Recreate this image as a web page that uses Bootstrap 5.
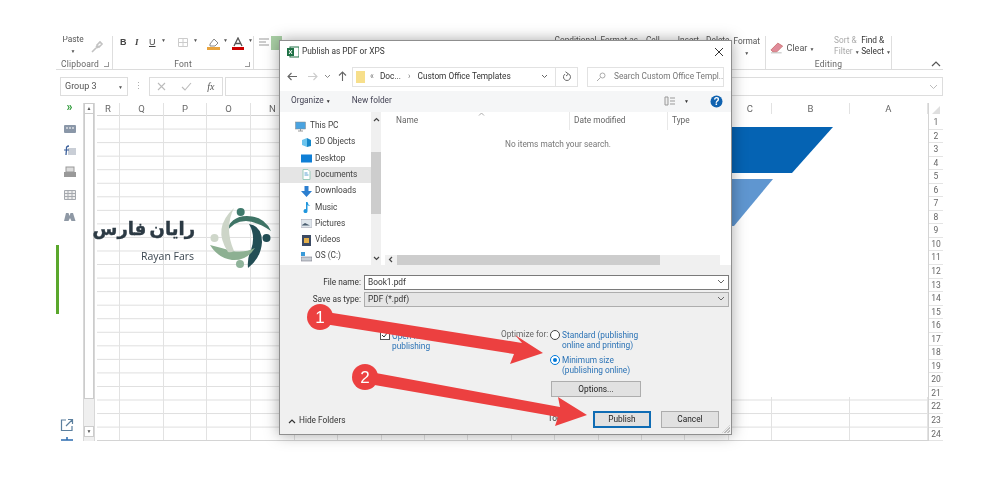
<!DOCTYPE html>
<html lang="en">
<head>
<meta charset="UTF-8">
<title>Publish as PDF or XPS</title>
<link href="https://cdn.jsdelivr.net/npm/bootstrap@5.3.0/dist/css/bootstrap.min.css" rel="stylesheet">
<style>
html,body{width:1000px;height:478px;overflow:hidden;background:#fff;}
body{position:relative;font-family:Roboto,"Liberation Sans",sans-serif;font-size:8.3px;color:#333;line-height:1.2;filter:blur(.3px);}
/* excel window */
.xl-win{width:887px;height:404px;margin:36px 0 0 56px;}
.xl-ribbon{height:34px;border-bottom:1px solid #dcdcdc;overflow:hidden;font-size:8.3px;color:#555;}
.rb-grp{height:100%;border-right:1px solid #dedede;position:relative;flex:none;}
.rb-top{height:23px;}
.rb-lbl{height:10px;line-height:10px;text-align:center;color:#666;font-size:8.5px;letter-spacing:.2px;}
.rb-clip{width:57px;}
.rb-font{width:141px;}
.rb-mid{width:512px;}
.rb-edit{width:126px;}
.rb-stack{line-height:10.500px;margin-top:-2px;}
.rb-caret{font-size:5px;color:#555;}
.rb-ltr{font:bold 9px "Liberation Serif",serif;color:#444;}
.launch{width:5px;height:5px;border:1px solid #999;border-width:0 1px 1px 0;position:absolute;bottom:2px;right:3px;}
.xl-fbar{height:19px;margin:7px 0 7px 4px;gap:0;}
.fb-name{width:68px;border:1px solid #ddd;padding:0 4px;font-size:9px;color:#555;}
.fb-dots{width:21px;text-align:center;color:#aaa;font-size:9px;}
.fb-btns{width:74px;border:1px solid #ddd;margin-right:2px;color:#aaa;}
.fb-input{flex:1;border:1px solid #ddd;}
.xl-sheet{height:338px;}
.xl-rail{width:27px;margin-top:-2px;gap:6px;}
.rail-ico{height:16px;}
.rail-more{color:#2e9b3a;font-size:12px;font-weight:700;line-height:14px;margin:-1px 0 1px;}
.side-bar{position:absolute;left:56px;top:245px;width:3px;height:69px;background:#5aa72c;}
.ol-scroll{width:12px;margin-right:2px;background:#efefef;border:1px solid #d8d8d8;border-width:0 1px;position:relative;}
.ol-btn{height:11px;background:#fff;border:1px solid #ccc;font-size:5px;text-align:center;line-height:9px;color:#555;}
.ol-thumb{height:285px;background:#fff;border:1px solid #ccc;border-top:0;}
.gd-wrap{flex:1;height:338px;}
.gd-cols{height:100%;background:repeating-linear-gradient(to bottom,transparent 0,transparent 12.56px,#dedede 12.56px,#dedede 13.56px);background-position:0 13px;background-size:100% 13.56px;background-repeat:repeat-y;border-bottom:1px solid #d4d4d4;}
.gd-col{height:100%;border-right:1px solid #e2e2e2;flex:none;}
.gd-head{height:13px;background:#fff;border-bottom:1px solid #d4d4d4;text-align:center;font-size:9.5px;line-height:12px;color:#666;}
.gd-rows{width:15px;border-left:1px solid #d4d4d4;background:#fff;}
.gd-corner{height:13px;position:relative;}
.gd-corner::after{content:"";position:absolute;right:3px;bottom:2px;border-style:solid;border-width:0 0 8px 8px;border-color:transparent transparent #dfdfdf transparent;}
.gd-num{height:13.56px;line-height:13px;font-size:8.5px;color:#666;text-align:center;border-bottom:1px solid #e4e4e4;}
.pic-blank{position:absolute;left:732px;top:114px;width:196px;height:283px;background:#fff;}
.over-svg{position:absolute;left:0;top:0;pointer-events:none;}
/* logo */
.logo-fa{position:absolute;left:96px;top:214px;width:99px;font:bold 18px "DejaVu Sans",sans-serif;color:#2c3a44;direction:rtl;text-align:center;white-space:nowrap;line-height:30px;word-spacing:-3px;-webkit-text-stroke:.4px #2c3a44;}
.logo-en{position:absolute;left:141px;top:249px;font:10.5px/14px "Open Sans",sans-serif;color:#3b4650;white-space:nowrap;}
/* dialog */
.dlg{position:absolute;left:279px;top:40px;width:453px;height:395px;background:#fff;border:1px solid #8f8f8f;box-shadow:0 0 14px rgba(0,0,0,.35);color:#333;}
.dlg-title{height:22px;padding:0 7px 0 3px;font-size:8.3px;}
.dlg-nav{height:20px;margin-top:4px;padding:0 7px 0 5px;}
.nav-btn{width:15px;margin-right:3px;text-align:center;line-height:0;}
.addr{width:204px;height:20px;border:1px solid #e2e2e2;padding:0 7px 0 3px;}
.addr-ref{width:22px;height:20px;border:1px solid #e2e2e2;border-left:0;}
.srch{width:137px;height:20px;border:1px solid #e2e2e2;margin-left:9px;padding:0 2px 0 8px;color:#777;white-space:nowrap;overflow:hidden;}
.dlg-tools{height:21px;margin-top:4px;background:#f5f6f7;padding:0 8px 0 11px;color:#445;}
.dlg-body{height:154px;position:relative;}
.nav-tree{width:91px;height:100%;padding-top:6px;}
.tree-row{height:16.3px;padding-left:21px;color:#444;white-space:nowrap;}
.tree-row.pc{padding-left:15px;}
.tree-row.sel{background:#e5e5e5;}
.vscroll{width:10px;height:100%;background:#f0f0f0;position:relative;}
.vs-thumb{position:absolute;top:40px;left:0;right:0;height:62px;background:#cdcdcd;}
.sc-arr{position:absolute;left:0;right:0;text-align:center;font-size:7px;line-height:9px;color:#555;}
.lst-wrap{flex:1;position:relative;}
.lst-head{height:18px;color:#666;}
.lst-name{width:188px;padding-left:15px;}
.lst-date{width:98px;padding-left:4px;border-left:1px solid #e8e8e8;height:100%;}
.lst-type{padding-left:4px;border-left:1px solid #e8e8e8;height:100%;}
.lst-empty{text-align:center;color:#777;margin-top:10px;padding-left:4px;}
.hscroll{position:absolute;left:4px;bottom:0;width:335px;height:10px;background:#f0f0f0;}
.hs-thumb{position:absolute;left:12px;top:0;bottom:0;width:263px;background:#cdcdcd;}
.dlg-foot{height:169px;background:#f0f0f0;padding-top:10px;}
.fld-row{height:15px;margin-bottom:2px;}
.fld-lbl{width:84px;text-align:right;padding-right:3px;color:#333;}
.fld-box{width:365px;height:15px;border:1px solid #7a7a7a;background:#fff;padding:0 3px;position:relative;line-height:13px;}
.fld-box.combo{background:#e5e5e5;border-color:#adadad;}
.fld-chev{position:absolute;right:3px;top:3px;}
.opt-row{margin-top:21px;margin-left:100px;height:51px;}
.opt-left{width:121px;}
.chk{width:10px;height:10px;border:1px solid #555;background:#fff;flex:none;margin-right:2px;margin-top:-1px;}
.opt-link{color:#2a72b5;line-height:10px;}
.opt-lbl{width:49px;color:#666;white-space:nowrap;}
.rad{width:10px;height:10px;border:1px solid #444;border-radius:50%;background:#fff;flex:none;margin:0 2px 0 0;position:relative;}
.rad.on{border-color:#0078d7;}
.rad.on::after{content:"";position:absolute;inset:2px;border-radius:50%;background:#0078d7;}
.rad-item{margin-bottom:5px;}
.dlg-btn{width:58px;height:17px;background:#e1e1e1;border:1px solid #adadad;font-size:8.3px;color:#222;text-align:center;line-height:15px;padding:0;border-radius:0;}
.dlg-btn.pri{border:2px solid #0f6cb4;line-height:13px;}
.btn-opt{width:90px;height:16px;line-height:14px;display:block;}
.dlg-bot{margin-top:13px;height:18px;padding:0 12px 0 8px;}
.hide-fld{color:#333;margin-top:3px;}
.gripper{position:absolute;right:1px;bottom:1px;width:8px;height:8px;background:repeating-linear-gradient(135deg,transparent 0,transparent 1px,#bbb 1px,#bbb 2px);clip-path:polygon(100% 0,100% 100%,0 100%);}
</style>
</head>
<body>
<div class="xl-win">
  <div class="xl-ribbon d-flex">
    <div class="rb-grp rb-clip">
      <div class="rb-top d-flex">
        <div class="rb-stack text-center" style="width:34px">Paste<br><span class="rb-caret">▼</span></div>
        <svg width="14" height="14" viewBox="0 0 14 14" class="mt-1"><path d="M2 12 7 7M7 5l3-3 2 2-3 3zM6 6l2 2" stroke="#c2c2c2" stroke-width="1.600" fill="none"/></svg>
      </div>
      <div class="rb-lbl pe-2">Clipboard</div><span class="launch"></span>
    </div>
    <div class="rb-grp rb-font">
      <div class="rb-top d-flex align-items-start" style="padding:1px 0 0 7px">
        <span class="rb-ltr" style="width:15px;font-family:'Liberation Sans'">B</span>
        <span class="rb-ltr fst-italic" style="width:14px">I</span>
        <span class="rb-ltr text-decoration-underline" style="width:12px;font-family:'Liberation Sans';font-weight:400">U</span>
        <span class="rb-caret" style="width:12px">▼</span>
        <svg width="12" height="11" viewBox="0 0 12 11" class="me-1 ms-1"><path d="M1.500 1.500h9v8h-9zM6 1.500v8M1.500 5.500h9" stroke="#ccc" fill="none"/></svg>
        <span class="rb-caret" style="width:14px">▼</span>
        <svg width="13" height="13" viewBox="0 0 13 13" style="margin-right:3px"><path d="M3 7 7 2l4 4-3 3H3z" fill="#fff" stroke="#888"/><rect y="10" width="13" height="3" fill="#e8a33d"/></svg>
        <span class="rb-caret" style="width:9px">▼</span>
        <svg width="12" height="13" viewBox="0 0 12 13"><path d="M2 9 6 1l4 8M3.600 6.500h4.800" stroke="#555" stroke-width="1.300" fill="none"/><rect y="10" width="12" height="3" fill="#c00"/></svg>
        <span class="rb-caret ms-1">▼</span>
      </div>
      <div class="rb-lbl">Font</div><span class="launch"></span>
    </div>
    <div class="rb-grp rb-mid">
      <div class="rb-top d-flex">
        <svg width="24" height="14" viewBox="0 0 24 14" class="ms-1"><path d="M1 3h10M1 6h7M1 9h10" stroke="#999"/><rect x="13" width="11" height="14" fill="#a9cfa5"/></svg>
        <div class="ms-auto d-flex text-nowrap" style="margin-right:5px"><span>Conditional</span><span style="margin-left:4px">Format as</span><span style="margin-left:8px">Cell</span><span style="margin-left:18px">Insert</span><span style="margin-left:7px">Delete</span><span class="text-center rb-stack" style="margin:0 0 0 4px">Format<br><span class="rb-caret">▼</span></span></div>
      </div>
    </div>
    <div class="rb-grp rb-edit">
      <div class="rb-top d-flex">
        <svg width="14" height="13" viewBox="0 0 14 13" class="ms-1" style="margin-top:5px"><path d="M1 9 8 2l5 3-6 6H3z" fill="#e08b9a" stroke="#c77"/><path d="M1 12h11" stroke="#bbb"/></svg>
        <span style="margin:7px 0 0 3px;font-size:9px;width:49px">Clear <span class="rb-caret">▼</span></span>
        <span class="rb-stack text-nowrap" style="width:28px;color:#aaa;margin-top:-1px">Sort &amp;<br>Filter <span class="rb-caret">▼</span></span>
        <span class="rb-stack text-nowrap" style="color:#333;margin-top:-1px">Find &amp;<br>Select <span class="rb-caret">▼</span></span>
      </div>
      <div class="rb-lbl">Editing</div>
    </div>
    <svg width="10" height="8" viewBox="0 0 10 8" style="margin:24px 0 0 39px"><path d="M1 6 5 2l4 4" stroke="#555" stroke-width="1.200" fill="none"/></svg>
  </div>
  <div class="xl-fbar d-flex align-items-stretch">
    <div class="fb-name d-flex align-items-center justify-content-between">Group 3<span class="rb-caret">▼</span></div>
    <div class="fb-dots d-flex align-items-center justify-content-center">⋮</div>
    <div class="fb-btns d-flex align-items-center justify-content-around">
      <svg width="9" height="9" viewBox="0 0 9 9"><path d="M1 1l7 7M8 1 1 8" stroke="#bbb" stroke-width="1.100"/></svg>
      <svg width="11" height="9" viewBox="0 0 11 9"><path d="M1 5l3 3 6-7" stroke="#bbb" stroke-width="1.100" fill="none"/></svg>
      <span class="fst-italic" style="font:italic 10px 'Liberation Serif',serif;color:#555">fx</span>
    </div>
    <div class="fb-input d-flex align-items-center justify-content-end pe-1"><svg width="9" height="6" viewBox="0 0 9 6"><path d="M1 1l3.500 3.500L8 1" stroke="#bbb" fill="none"/></svg></div>
  </div>
  <div class="xl-sheet d-flex">
    <div class="xl-rail d-flex flex-column align-items-center" style="flex:none">
      <span class="rail-more">»</span>
      <svg class="rail-ico" width="14" height="16" viewBox="0 0 14 16"><rect x="1" y="4" width="12" height="8" rx="1" fill="#8a97a8"/><path d="M3 7h8" stroke="#fff" stroke-dasharray="2 1"/></svg>
      <svg class="rail-ico" width="14" height="16" viewBox="0 0 14 16"><rect x="5" y="5" width="8" height="7" fill="#c9ced6"/><path d="M6 3Q3 3 3.500 6L3 12" stroke="#3a5f9a" stroke-width="1.300" fill="none"/><path d="M1 7h5" stroke="#3a5f9a"/></svg>
      <svg class="rail-ico" width="14" height="16" viewBox="0 0 14 16"><rect x="3" y="2" width="8" height="5" fill="#ddd" stroke="#999"/><rect x="1" y="7" width="12" height="5" fill="#999"/></svg>
      <svg class="rail-ico" width="14" height="16" viewBox="0 0 14 16"><path d="M1.500 3.500h11v9h-11zM1.500 6.500h11M1.500 9.500h11M5 3.500v9M9 3.500v9" stroke="#a5a9ae" fill="#eee"/></svg>
      <svg class="rail-ico" width="14" height="16" viewBox="0 0 14 16"><path d="M1 12 3 4h2.500l1 3 1-3H10l2.500 8H8.500L7 9l-1.500 3z" fill="#8f99a5"/></svg>
      <svg class="rail-ico mt-auto" style="margin-bottom:-2px;margin-left:-5px" width="14" height="14" viewBox="0 0 14 14"><path d="M6 2H1.500v10.500H12V8M8 1.500h4.500V6M12.500 1.500 6 8" stroke="#5b7f9e" stroke-width="1.200" fill="none"/></svg>
      <svg style="margin-left:-5px" width="14" height="4" viewBox="0 0 14 4"><path d="M1 3h12M7 0v3" stroke="#2d6cb0" stroke-width="1.500"/></svg>
    </div>
    <div class="ol-scroll d-flex flex-column">
      <div class="ol-btn">▲</div>
      <div class="ol-thumb"></div>
      <div class="ol-btn mt-auto mb-1">▼</div>
    </div>
    <div class="gd-wrap d-flex">
      <div class="gd-cols d-flex flex-grow-1" id="gridCols"></div>
      <div class="gd-rows" id="gridRows"><div class="gd-corner"></div></div>
    </div>
  </div>
</div>
<div class="side-bar"></div>

<div class="pic-blank"></div>
<svg class="over-svg" width="1000" height="478" viewBox="0 0 1000 478">
  <polygon points="725,127 833,127 792,173 725,173" fill="#0563b3"/>
  <polygon points="725,179 773,179 734,226 725,226" fill="#5f96d0"/>
  <!-- logo mark -->
  <circle cx="240.700" cy="212" r="4" fill="#3f7a6c"/>
  <circle cx="266.500" cy="238" r="4" fill="#234e55"/>
  <circle cx="240" cy="264" r="4" fill="#8fb39a"/>
  <circle cx="214.500" cy="238" r="4" fill="#cfd7ca"/>
  <path d="M226 233Q230 216 247 216Q264 216 271 231Q258 222 246 221Q233 221 226 233Z" fill="#3f7466"/>
  <path d="M249 224Q262 226 262 242Q261 258 248 268Q247 258 251 250Q256 236 249 224Z" fill="#234e55"/>
  <path d="M210 245Q222 248 232 251Q245 253 255 248Q247 261 232 260Q218 258 210 245Z" fill="#8db092"/>
  <path d="M234 208Q212 228 228 252Q231 253 234 251Q224 228 234 208Z" fill="#cdd5c8"/>
</svg>
<div class="logo-fa">رایان فارس</div>
<div class="logo-en">Rayan Fars</div>

<div class="dlg d-flex flex-column">
  <div class="dlg-title d-flex align-items-center">
    <svg width="12" height="12" viewBox="0 0 12 12" class="ms-1" style="margin-right:3px"><rect x="3" y="1" width="9" height="10" fill="#fff" stroke="#1e7145"/><rect y="2" width="7" height="8" fill="#1e7145"/><path d="M2 4l3 4M5 4 2 8" stroke="#fff"/></svg>
    <span>Publish as PDF or XPS</span>
    <svg class="ms-auto" width="10" height="10" viewBox="0 0 10 10"><path d="M1 1l8 8M9 1 1 9" stroke="#333"/></svg>
  </div>
  <div class="dlg-nav d-flex align-items-center">
    <span class="nav-btn" style="margin-right:5px"><svg width="11" height="9" viewBox="0 0 11 9"><path d="M10 4.500H1M4.500 1 1 4.500 4.500 8" stroke="#666" stroke-width="1.100" fill="none"/></svg></span>
    <span class="nav-btn"><svg width="11" height="9" viewBox="0 0 11 9"><path d="M1 4.500h9M6.500 1 10 4.500 6.500 8" stroke="#ccc" stroke-width="1.100" fill="none"/></svg></span>
    <span class="nav-btn" style="width:9px"><svg width="7" height="5" viewBox="0 0 7 5"><path d="M1 1l2.500 2.500L6 1" stroke="#888" fill="none"/></svg></span>
    <span class="nav-btn" style="margin-right:2px"><svg width="9" height="11" viewBox="0 0 9 11"><path d="M4.500 10V1M1 4.500 4.500 1 8 4.500" stroke="#666" stroke-width="1.100" fill="none"/></svg></span>
    <div class="addr d-flex align-items-center">
      <svg width="9" height="12" viewBox="0 0 9 12" style="flex:none"><rect width="9" height="12" fill="#f7df8b"/></svg>
      <span style="color:#777;margin:0 6px 0 5px">«</span><span>Doc...</span><span style="color:#777;margin:0 7px">›</span><span class="text-nowrap">Custom Office Templates</span>
      <svg class="ms-auto" width="7" height="5" viewBox="0 0 7 5" style="flex:none"><path d="M1 1l2.500 2.500L6 1" stroke="#666" fill="none"/></svg>
    </div>
    <div class="addr-ref d-flex align-items-center justify-content-center"><svg width="10" height="11" viewBox="0 0 10 11"><path d="M6.800 3A3.500 3.500 0 1 1 3 3.100M3.500 .8 6.500 3 4 5" stroke="#666" fill="none"/></svg></div>
    <div class="srch d-flex align-items-center"><svg width="10" height="10" viewBox="0 0 10 10" style="flex:none;margin-right:8px"><circle cx="6.500" cy="3.500" r="2.500" stroke="#aaa" fill="none"/><path d="M4.500 5.500 1 9" stroke="#aaa"/></svg><span>Search Custom Office Templ...</span></div>
  </div>
  <div class="dlg-tools d-flex align-items-center">
    <span>Organize <span class="rb-caret" style="color:#333">▼</span></span>
    <span style="margin-left:21px">New folder</span>
    <svg class="ms-auto" width="12" height="10" viewBox="0 0 12 10"><path d="M1 1h3v8H1zM6 2h5M6 5h5M6 8h5" stroke="#999" fill="#eee"/></svg>
    <span class="rb-caret ms-2" style="color:#333">▼</span>
    <svg style="margin-left:21px" width="13" height="13" viewBox="0 0 13 13"><circle cx="6.500" cy="6.500" r="6" fill="#0f62b0"/><text x="6.500" y="10" text-anchor="middle" fill="#fff" font-family="Liberation Sans" font-weight="700" font-size="10">?</text></svg>
  </div>
  <div class="dlg-body d-flex">
    <div class="nav-tree">
      <div class="tree-row pc d-flex align-items-center"><svg width="11" height="11" viewBox="0 0 11 11" class="me-1"><rect x=".5" y="1" width="10" height="7" fill="#4aa3e0" stroke="#888" stroke-width=".5"/><path d="M3 10h5M5.500 8v2" stroke="#999"/></svg>This PC</div>
      <div class="tree-row d-flex align-items-center"><svg width="11" height="11" viewBox="0 0 11 11" style="margin-right:3px"><path d="M1 3l5-2v9L1 8z" fill="#6bc4ee"/><path d="M6 1l4 2v6l-4 1z" fill="#1688c9"/></svg>3D Objects</div>
      <div class="tree-row d-flex align-items-center"><svg width="11" height="11" viewBox="0 0 11 11" style="margin-right:3px"><rect y="1.500" width="11" height="8" fill="#0f7fd6"/></svg>Desktop</div>
      <div class="tree-row sel d-flex align-items-center"><svg width="11" height="11" viewBox="0 0 11 11" style="margin-right:3px"><path d="M2 .5h5l2 2v8H2z" fill="#fff" stroke="#9cb"/><path d="M3.500 4h3M3.500 6h4" stroke="#5aa0d0"/></svg>Documents</div>
      <div class="tree-row d-flex align-items-center"><svg width="11" height="11" viewBox="0 0 11 11" style="margin-right:3px"><path d="M3.500 0h4v5H11L5.500 11 0 5h3.500z" fill="#2c7fd0"/></svg>Downloads</div>
      <div class="tree-row d-flex align-items-center"><svg width="11" height="11" viewBox="0 0 11 11" style="margin-right:3px"><path d="M5 0h1.500q.5 3 3 4-2 0-3-1v6a2 2 0 1 1-1.500-1.800z" fill="#1f96dd"/></svg>Music</div>
      <div class="tree-row d-flex align-items-center"><svg width="11" height="11" viewBox="0 0 11 11" style="margin-right:3px"><rect y="1.500" width="11" height="8" fill="#dfe6ec" stroke="#99a" stroke-width=".5"/><path d="M1 7l3-2 5 2.500H1z" fill="#4b5e70"/></svg>Pictures</div>
      <div class="tree-row d-flex align-items-center"><svg width="11" height="11" viewBox="0 0 11 11" style="margin-right:3px"><rect x="1" width="9" height="11" fill="#3c4a63"/><rect x="3" y="3" width="5" height="5" fill="#e4b04a"/></svg>Videos</div>
      <div class="tree-row d-flex align-items-center"><svg width="11" height="11" viewBox="0 0 11 11" style="margin-right:3px"><rect x="0" y="1" width="4" height="4" fill="#3b9bd9"/><rect y="6" width="11" height="4" fill="#c9ced4" stroke="#667" stroke-width=".5"/></svg>OS (C:)</div>
    </div>
    <div class="vscroll">
      <span class="sc-arr" style="top:3px"><svg width="7" height="5" viewBox="0 0 7 5"><path d="M1 4l2.500-2.500L6 4" stroke="#444" stroke-width="1.200" fill="none"/></svg></span>
      <div class="vs-thumb"></div>
      <span class="sc-arr" style="bottom:2px"><svg width="7" height="5" viewBox="0 0 7 5"><path d="M1 1l2.500 2.500L6 1" stroke="#444" stroke-width="1.200" fill="none"/></svg></span>
    </div>
    <div class="lst-wrap">
      <div class="lst-head d-flex align-items-center">
        <div class="lst-name">Name</div>
        <div class="lst-date d-flex align-items-center">Date modified</div>
        <div class="lst-type d-flex align-items-center">Type</div>
      </div>
      <svg width="7" height="4" viewBox="0 0 7 4" style="position:absolute;left:97px;top:0"><path d="M1 3.500 3.500 1 6 3.500" stroke="#aaa" fill="none"/></svg>
      <div class="lst-empty">No items match your search.</div>
      <div class="hscroll">
        <svg width="5" height="7" viewBox="0 0 5 7" style="position:absolute;left:3px;top:1px"><path d="M4 1 1.500 3.500 4 6" stroke="#444" stroke-width="1.200" fill="none"/></svg>
        <div class="hs-thumb"></div>
      </div>
    </div>
  </div>
  <div class="dlg-foot d-flex flex-column position-relative">
    <div class="fld-row d-flex align-items-center">
      <div class="fld-lbl">File name:</div>
      <div class="fld-box">Book1.pdf<svg class="fld-chev" width="8" height="6" viewBox="0 0 8 6"><path d="M1 1l3 3 3-3" stroke="#666" fill="none"/></svg></div>
    </div>
    <div class="fld-row d-flex align-items-center">
      <div class="fld-lbl">Save as type:</div>
      <div class="fld-box combo">PDF (*.pdf)<svg class="fld-chev" width="8" height="6" viewBox="0 0 8 6"><path d="M1 1l3 3 3-3" stroke="#666" fill="none"/></svg></div>
    </div>
    <div class="opt-row d-flex">
      <div class="opt-left d-flex" style="padding-top:1px">
        <div class="chk d-flex align-items-center justify-content-center"><svg width="8" height="8" viewBox="0 0 8 8"><path d="M1 4l2 2 4-5" stroke="#333" fill="none"/></svg></div>
        <div class="opt-link">Open file after<br>publishing</div>
      </div>
      <div class="opt-lbl">Optimize for:</div>
      <div>
        <div class="rad-item d-flex"><span class="rad"></span><span class="opt-link">Standard (publishing<br>online and printing)</span></div>
        <div class="rad-item d-flex"><span class="rad on"></span><span class="opt-link">Minimum size<br>(publishing online)</span></div>
      </div>
    </div>
    <div style="margin-left:271px"><button class="dlg-btn btn btn-opt" type="button">Options...</button></div>
    <div class="dlg-bot d-flex align-items-center">
      <span class="hide-fld d-flex align-items-center"><svg width="8" height="6" viewBox="0 0 8 6" style="margin-right:3px"><path d="M1 5l3-3 3 3" stroke="#333" stroke-width="1.200" fill="none"/></svg>Hide Folders</span>
      <span class="ms-auto" style="margin-right:25px">Tools</span>
      <button class="dlg-btn btn pri" type="button">Publish</button>
      <button class="dlg-btn btn" type="button" style="margin-left:10px">Cancel</button>
    </div>
    <span class="gripper"></span>
  </div>
</div>

<svg class="over-svg" width="1000" height="478" viewBox="0 0 1000 478">
  <g fill="#ec4040">
    <path d="M320 311 522 343 515 335 543 353 510 364 514 354 318 323Z"/>
    <path d="M365 371 560 407 558 397 587 415 555 426 558 417 363 383Z"/>
    <circle cx="320" cy="317" r="13"/>
    <circle cx="365" cy="377" r="13"/>
  </g>
  <text x="320" y="323" text-anchor="middle" font-family="Liberation Sans" font-size="17" fill="#fff">1</text>
  <text x="365" y="383" text-anchor="middle" font-family="Liberation Sans" font-size="17" fill="#fff">2</text>
</svg>

<script>
  // column letters and row numbers of the sheet (M to D sit behind the dialog, so no letters there)
  const cols = [['R',23],['Q',44],['P',43],['O',44],['N',44]];
  'MLKJIHGFED'.split('').forEach(() => cols.push(['',43.36]));
  cols.push(['C',43.36],['B',78],['A',78]);
  document.getElementById('gridCols').innerHTML = cols.map(c =>
    `<div class="gd-col" style="width:${c[1]}px"><div class="gd-head">${c[0]}</div></div>`).join('');
  let rows = '';
  for (let i = 1; i <= 24; i++) rows += `<div class="gd-num">${i}</div>`;
  document.getElementById('gridRows').insertAdjacentHTML('beforeend', rows);
</script>
<script src="https://cdn.jsdelivr.net/npm/bootstrap@5.3.0/dist/js/bootstrap.bundle.min.js"></script>
</body>
</html>
